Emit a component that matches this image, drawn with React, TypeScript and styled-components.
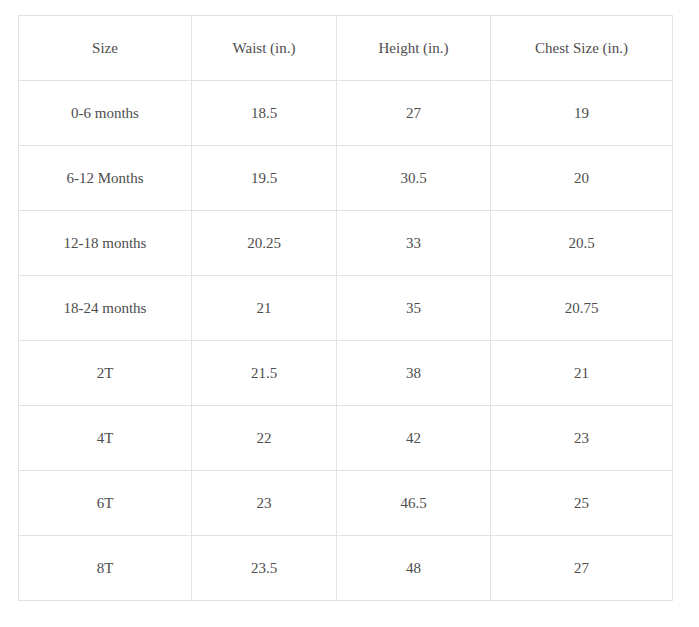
import React from "react";
import styled, { createGlobalStyle } from "styled-components";

const Global = createGlobalStyle`
  html, body { margin: 0; padding: 0; background: #ffffff; }
`;

const Page = styled.div`
  padding: 15px 0 0 18px;
`;

const Table = styled.table`
  width: 655px;
  border-collapse: collapse;
  table-layout: fixed;
  font-family: "Liberation Serif", "Times New Roman", serif;
  font-size: 15px;
  color: #4d4d4d;
`;

const Cell = styled.td`
  border: 1px solid #e3e3e3;
  height: 65px;
  padding: 1px 6px 0;
  text-align: center;
  vertical-align: middle;
  box-sizing: border-box;
`;

const widths = [173, 145, 154, 182];

const header = ["Size", "Waist (in.)", "Height (in.)", "Chest Size (in.)"];
const rows = [
  ["0-6 months", "18.5", "27", "19"],
  ["6-12 Months", "19.5", "30.5", "20"],
  ["12-18 months", "20.25", "33", "20.5"],
  ["18-24 months", "21", "35", "20.75"],
  ["2T", "21.5", "38", "21"],
  ["4T", "22", "42", "23"],
  ["6T", "23", "46.5", "25"],
  ["8T", "23.5", "48", "27"],
];

export default function App() {
  return (
    <>
      <Global />
      <Page>
        <Table>
          <colgroup>
            {widths.map((w, i) => (
              <col key={i} style={{ width: w }} />
            ))}
          </colgroup>
          <tbody>
            {[header, ...rows].map((r, i) => (
              <tr key={i}>
                {r.map((c, j) => (
                  <Cell key={j}>{c}</Cell>
                ))}
              </tr>
            ))}
          </tbody>
        </Table>
      </Page>
    </>
  );
}
